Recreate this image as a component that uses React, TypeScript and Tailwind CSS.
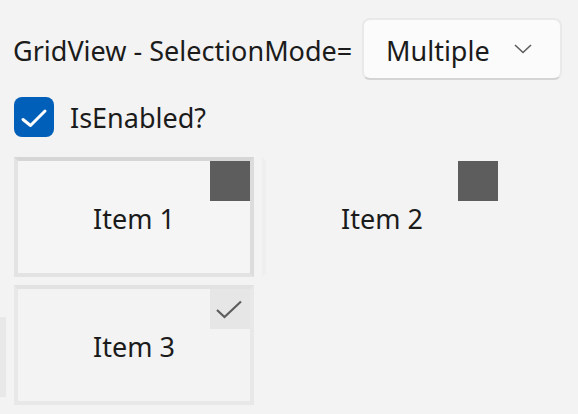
import React, { useState } from "react";

interface GridItem {
  id: number;
  label: string;
  state: "selected" | "plain" | "checked";
}

const items: GridItem[] = [
  { id: 1, label: "Item 1", state: "selected" },
  { id: 2, label: "Item 2", state: "plain" },
  { id: 3, label: "Item 3", state: "checked" },
];

const App = () => {
  const [enabled, setEnabled] = useState(true);

  return (
    <div className="relative h-[414px] w-full overflow-hidden bg-[#f3f3f3] font-['Segoe_UI','Noto_Sans',sans-serif] text-[#1b1b1b]">
      {/* stray item edge on the left */}
      <div className="absolute left-0 top-[317px] h-[80px] w-[6px] bg-[#e8e8e8]" />

      <div className="pl-[14px] pt-[18px]">
        {/* Selection mode row */}
        <div className="flex h-[62px] items-center">
          <span className="-ml-px w-[349px] shrink-0 pt-[3px] text-[27px] leading-none">GridView - SelectionMode=</span>
          <button className="flex h-[62px] w-[200px] items-center justify-between rounded-[8px] border-2 border-[#e9e9e9] border-b-[#d4d4d4] bg-[#fbfbfb] pl-[22px] pr-[28px]">
            <span className="pt-[2px] text-[27px] leading-none">Multiple</span>
            <svg width="18" height="10" viewBox="0 0 18 10" fill="none">
              <polyline points="1,1 9,8.5 17,1" stroke="#5d5d5d" strokeWidth="1.6" />
            </svg>
          </button>
        </div>

        {/* IsEnabled row */}
        <div className="mt-[17px] flex items-center">
          <button
            onClick={() => setEnabled(!enabled)}
            className={`flex h-[40px] w-[40px] items-center justify-center rounded-[8px] ${enabled ? "bg-[#005fb8]" : "border-2 border-[#8a8a8a] bg-white"}`}
          >
            {enabled && (
              <svg width="40" height="40" viewBox="0 0 40 40" fill="none">
                <polyline points="9,22.5 16.5,28.5 31,14" stroke="#ffffff" strokeWidth="3" strokeLinecap="round" strokeLinejoin="round" />
              </svg>
            )}
          </button>
          <span className="ml-[16px] text-[27px] leading-none">IsEnabled?</span>
        </div>

        {/* GridView */}
        <div className="mt-[20px] grid grid-cols-[240px_240px] gap-[8px]">
          {items.map((item) => (
            <div
              key={item.id}
              className={`relative flex h-[120px] items-center justify-center border-[4px] ${
                item.state === "selected"
                  ? "border-[#e3e3e3] border-t-[#d6d6d6] border-r-[#dcdcdc] bg-[#f5f5f5]"
                  : item.state === "checked"
                  ? "border-[#e8e8e8] border-t-[#e2e2e2] bg-[#f3f3f3]"
                  : "border-transparent border-l-[#eeeeee] bg-[#f3f3f3]"
              }`}
            >
              <span className="pt-[2px] text-[27px] leading-none">{item.label}</span>
              {item.state !== "checked" ? (
                <div className="absolute right-0 top-0 h-[40px] w-[40px] bg-[#5d5d5d]" />
              ) : (
                <div className="absolute right-0 top-0 flex h-[40px] w-[40px] items-center justify-center bg-[#e6e6e6]">
                  <svg width="40" height="40" viewBox="0 0 40 40" fill="none">
                    <polyline points="7,21 14.5,28 31,12.5" stroke="#5d5d5d" strokeWidth="2.2" />
                  </svg>
                </div>
              )}
            </div>
          ))}
        </div>
      </div>
    </div>
  );
};

export default App;
